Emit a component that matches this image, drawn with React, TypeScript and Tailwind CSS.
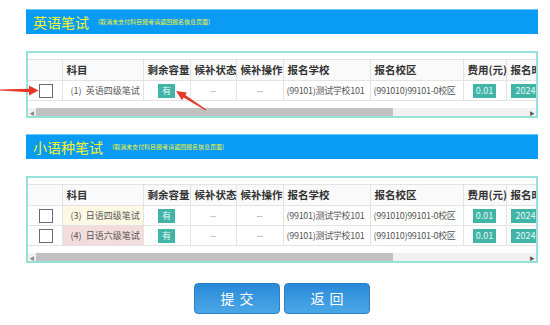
import React from "react"

type Row = { no: string; name: string; bg: string }

function SectionHeader({ title }: { title: string }) {
  return (
    <div className="flex items-center h-[25px] bg-[#0a9bf5] border-t border-[#6ec6ff] pl-[7px]">
      <span className="text-[14px] leading-none text-[#f4f42a]">{title}</span>
      <span className="ml-[9px] text-[6px] leading-none text-[#f4f42a]">(取消未支付科目报考请返回报名信息页面)</span>
    </div>
  )
}

function Badge({ text, w, left }: { text: string; w: string; left?: boolean }) {
  return (
    <span
      className={`inline-flex items-center h-[14px] ${w} ${left ? "justify-start pl-[5px]" : "justify-center"} bg-[#40b5a7] text-[#e8f7f5] text-[9px] leading-none`}
    >
      {text}
    </span>
  )
}

function ExamTable({ rows }: { rows: Row[] }) {
  const th = "border-x border-[#e3e3e3] text-left pl-[4px] font-semibold text-[10.5px] text-[#333] whitespace-nowrap"
  const td = "border-x border-[#e3e3e3] text-[9px] text-[#555] whitespace-nowrap overflow-hidden"
  return (
    <div className="border-2 border-[#95e2da] pt-[6px] overflow-hidden">
      <table className="table-fixed border-collapse w-[560px]">
        <colgroup>
          <col className="w-[34px]" />
          <col className="w-[81px]" />
          <col className="w-[47px]" />
          <col className="w-[46px]" />
          <col className="w-[47px]" />
          <col className="w-[87px]" />
          <col className="w-[93px]" />
          <col className="w-[43px]" />
          <col className="w-[82px]" />
        </colgroup>
        <thead>
          <tr className="h-[21px] bg-[#fafafa] border-y border-[#e3e3e3]">
            <th className="border-r border-[#e3e3e3]"></th>
            <th className={th}>科目</th>
            <th className={th}>剩余容量</th>
            <th className={th}>候补状态</th>
            <th className={th}>候补操作</th>
            <th className={th}>报名学校</th>
            <th className={th}>报名校区</th>
            <th className={th}>费用(元)</th>
            <th className={th}>报名时间</th>
          </tr>
        </thead>
        <tbody>
          {rows.map((r) => (
            <tr key={r.no} className="h-[20px] border-b border-[#e3e3e3]">
              <td className="border-r border-[#e3e3e3]">
                <div className="flex justify-center pl-[2px]">
                  <span className="block w-[14px] h-[14px] border-[1.5px] border-[#6b6b6b] bg-white"></span>
                </div>
              </td>
              <td className={`${td} ${r.bg} pl-[8px]`}>
                ({r.no})&nbsp;&nbsp;{r.name}
              </td>
              <td className={`${td} text-center`}>
                <Badge text="有" w="w-[17px]" />
              </td>
              <td className={`${td} text-center text-[#999]`}>--</td>
              <td className={`${td} text-center text-[#999]`}>--</td>
              <td className={`${td} pl-[3px] tracking-[-0.3px]`}>(99101)测试学校101</td>
              <td className={`${td} pl-[3px] tracking-[-0.3px]`}>(991010)99101-0校区</td>
              <td className={`${td} text-center`}>
                <Badge text="0.01" w="w-[23px]" />
              </td>
              <td className={`${td} pl-[4px]`}>
                <Badge text="2024-05-20" w="w-[70px]" left />
              </td>
            </tr>
          ))}
        </tbody>
      </table>
      <div className="mt-[7px] flex items-center h-[8px] bg-[#f1f1f1]">
        <span className="w-[8px] text-[5px] leading-none text-[#888] text-center">◀</span>
        <div className="w-[357px] h-[8px] bg-[#c1c1c1]"></div>
        <div className="flex-1"></div>
        <span className="w-[8px] text-[5px] leading-none text-[#555] text-center">▶</span>
      </div>
    </div>
  )
}

export default function App() {
  return (
    <div className="relative w-[550px] h-[325px] bg-white overflow-hidden font-['Microsoft_YaHei','Noto_Sans_CJK_SC',sans-serif]">
      <div className="ml-[26px] w-[512px] pt-[9px]">
        <SectionHeader title="英语笔试" />
        <div className="mt-[17px]">
          <ExamTable rows={[{ no: "1", name: "英语四级笔试", bg: "bg-white" }]} />
        </div>
        <div className="mt-[16px]">
          <SectionHeader title="小语种笔试" />
        </div>
        <div className="mt-[17px]">
          <ExamTable
            rows={[
              { no: "3", name: "日语四级笔试", bg: "bg-[#fcf8e3]" },
              { no: "4", name: "日语六级笔试", bg: "bg-[#f2dcdc]" },
            ]}
          />
        </div>
        <div className="mt-[20px] flex justify-center gap-[4px]">
          <button className="w-[86px] h-[31px] rounded-[4px] border border-[#2b7fc4] bg-gradient-to-b from-[#2a8ad8] to-[#4aa7e6] text-white text-[14px] tracking-[5px] pl-[5px]">
            提交
          </button>
          <button className="w-[86px] h-[31px] rounded-[4px] border border-[#2b7fc4] bg-gradient-to-b from-[#2a8ad8] to-[#4aa7e6] text-white text-[14px] tracking-[5px] pl-[5px]">
            返回
          </button>
        </div>
      </div>
      <svg className="absolute left-0 top-0 pointer-events-none" width="550" height="325" viewBox="0 0 550 325">
        <polygon points="0,89.6 29,88.8 29,85.5 38.5,90.5 29,95.5 29,92.2 0,90.6" fill="#e5372a" />
        <polygon points="176,91 186.9,92.5 185.3,95.1 206.3,109.6 205.7,110.4 183.6,97.6 182,100.2" fill="#e5372a" />
      </svg>
    </div>
  )
}
